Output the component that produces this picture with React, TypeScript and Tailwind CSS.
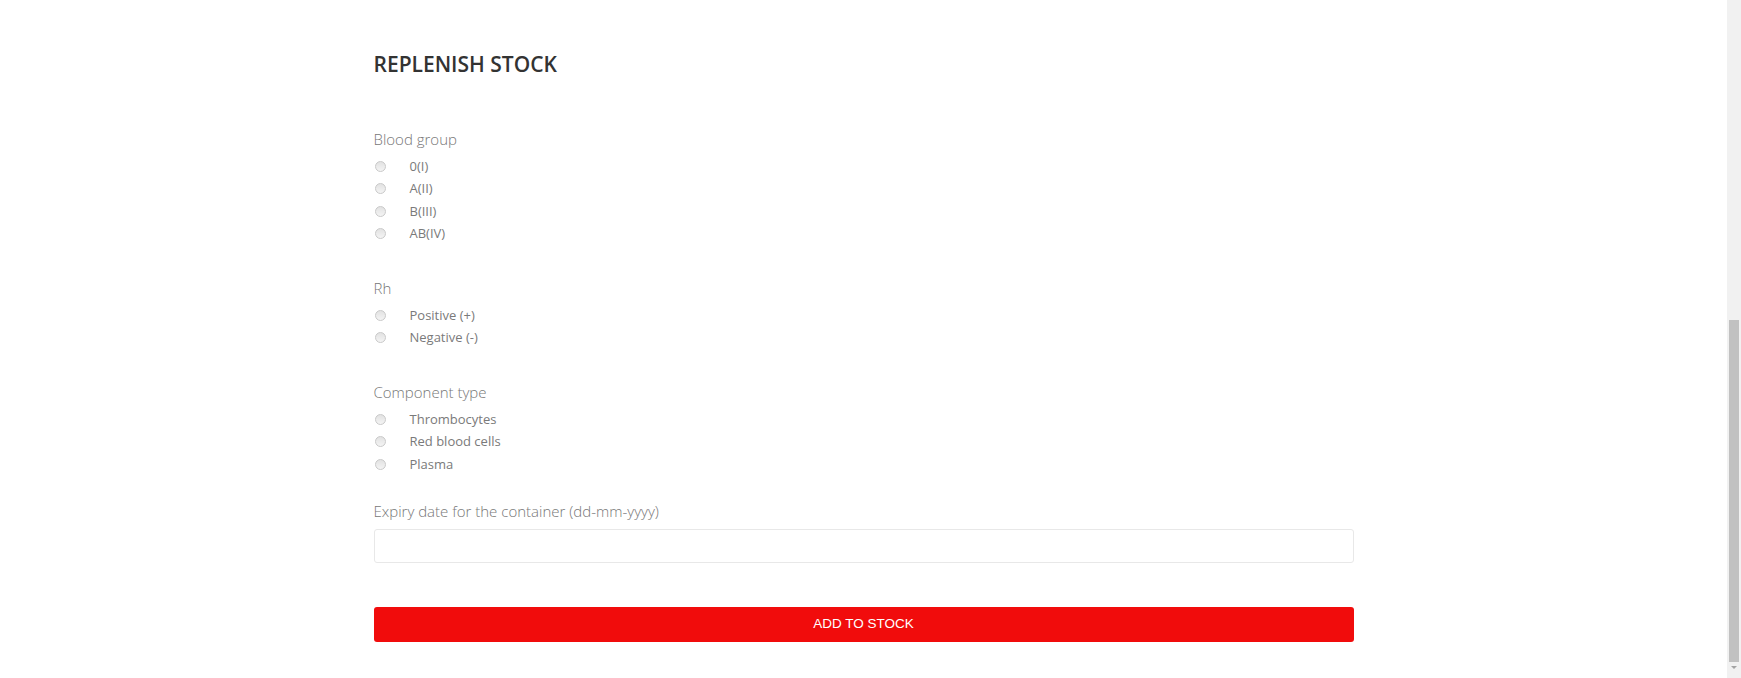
const groups = [
  { name: "blood", label: "Blood group", options: ["0(I)", "A(II)", "B(III)", "AB(IV)"] },
  { name: "rh", label: "Rh", options: ["Positive (+)", "Negative (-)"] },
  { name: "component", label: "Component type", options: ["Thrombocytes", "Red blood cells", "Plasma"] },
];

function RadioGroup({ name, label, options }: { name: string; label: string; options: string[] }) {
  return (
    <fieldset className="mb-[31px]">
      <legend className="text-[15px] font-light leading-[24px] text-[#777]">{label}</legend>
      <div className="mt-[4px]">
        {options.map((opt) => (
          <label key={opt} className="flex h-[22.5px] items-center text-[13px] text-[#7a7a7a]">
            <input
              type="radio"
              name={name}
              className="ml-[1px] h-[11px] w-[11px] appearance-none rounded-full border border-[#c9c9c9] bg-gradient-to-b from-[#e2e2e2] to-[#f4f4f4]"
            />
            <span className="ml-[24px]">{opt}</span>
          </label>
        ))}
      </div>
    </fieldset>
  );
}

export default function App() {
  return (
    <div
      className="flex h-[678px] w-full overflow-hidden bg-white"
      style={{ fontFamily: '"Open Sans", "Noto Sans", sans-serif' }}
    >
      <main className="flex-1">
        <div className="mx-auto w-[980px] pt-[52px]">
          {/* Title */}
          <h1 className="text-[21px] font-semibold leading-[24px] text-[#333]">REPLENISH STOCK</h1>

          <form className="mt-[51px]">
            {groups.map((g) => (
              <RadioGroup key={g.name} {...g} />
            ))}

            <div className="-mt-[7.5px]">
              <p className="text-[15px] font-light leading-[24px] text-[#777]">
                Expiry date for the container (dd-mm-yyyy)
              </p>
              <input
                type="text"
                className="mt-[6px] block h-[34px] w-full rounded-[3px] border border-[#e8e8e8] px-3 text-[13px] outline-none"
              />
            </div>

            <button
              type="button"
              className="mt-[44px] block h-[35px] w-full rounded-[3px] bg-[#f10c0c] text-[13.5px] text-white"
              style={{ fontFamily: '"Liberation Sans", Arial, sans-serif' }}
            >
              ADD TO STOCK
            </button>
          </form>
        </div>
      </main>

      {/* fake browser scrollbar */}
      <aside className="flex w-[14px] flex-col items-center bg-[#f1f1f1] pt-[320px]">
        <div className="h-[342px] w-[10px] bg-[#c1c1c1]" />
        <div className="mt-[4px] h-0 w-0 border-x-[3px] border-t-[3px] border-x-transparent border-t-[#a3a3a3]" />
      </aside>
    </div>
  );
}
